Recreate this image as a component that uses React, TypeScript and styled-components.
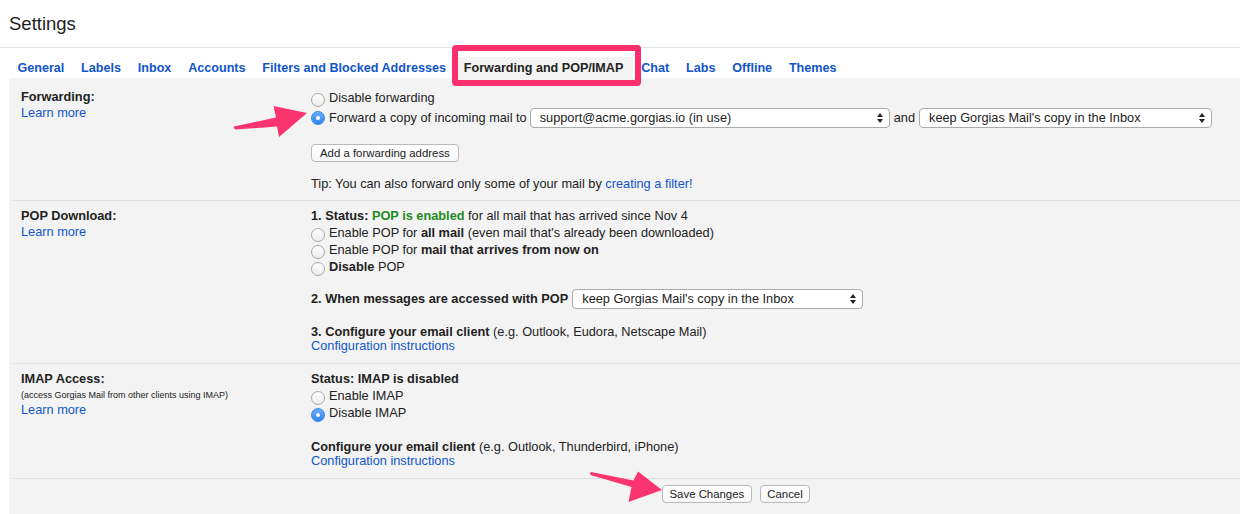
import React from 'react';
import styled, { createGlobalStyle } from 'styled-components';

const GlobalStyle = createGlobalStyle`
  html, body { margin: 0; padding: 0; background: #fff; }
  body {
    font-family: "Liberation Sans", Arial, Helvetica, sans-serif;
    font-size: 12.75px;
    color: #222;
  }
  * { box-sizing: border-box; }
`;

const Page = styled.div`
  position: relative;
  width: 1240px;
  height: 514px;
  overflow: hidden;
  background: #fff;
  display: flex;
  flex-direction: column;
`;

const Header = styled.div`
  height: 48px;
  padding: 13px 0 0 9px;
  border-bottom: 1px solid #e3e3e3;
  font-size: 18.5px;
  line-height: normal;
  color: #222;
`;

const TabBar = styled.div`
  display: flex;
  align-items: flex-end;
  height: 30px;
  padding: 9px 0 0 9px;
  font-size: 12.6px;
`;

const Tab = styled.div<{ $active?: boolean }>`
  padding: 4px ${(p) => (p.$active ? '9.5px' : '8.4px')} 3px;
  line-height: 14px;
  font-weight: bold;
  white-space: nowrap;
  color: ${(p) => (p.$active ? '#222' : '#15c')};
  background: ${(p) => (p.$active ? '#f3f3f3' : 'transparent')};
`;

const Panel = styled.div`
  flex: 1;
  margin-left: 9px;
  padding-top: 4px;
  background: #f3f3f3;
`;

const Section = styled.div<{ $pb: number }>`
  display: grid;
  grid-template-columns: 290px 1fr;
  margin-left: 4px;
  padding: 7px 0 ${(p) => p.$pb}px 8px;
  border-bottom: 1px solid #e0e0e0;
`;

const Col = styled.div`
  display: flex;
  flex-direction: column;
  align-items: flex-start;
`;

const SectionTitle = styled.div`
  font-weight: bold;
  line-height: 16px;
`;

const Link = styled.a`
  color: #15c;
  text-decoration: none;
  cursor: pointer;
`;

const BlockLink = styled(Link)<{ $lh?: number }>`
  display: block;
  line-height: ${(p) => p.$lh ?? 16}px;
`;

const Note = styled.div`
  font-size: 9px;
  line-height: 14px;
  margin-top: 1px;
  white-space: nowrap;
`;

const Line = styled.div<{ $mt?: number; $lh?: number }>`
  line-height: ${(p) => p.$lh ?? 16}px;
  margin-top: ${(p) => p.$mt ?? 0}px;
  white-space: nowrap;
`;

const Green = styled.b`
  color: #1f8a1f;
`;

const RadioRow = styled.label`
  display: flex;
  align-items: center;
  height: 17px;
  line-height: 17px;
  white-space: nowrap;
`;

const ControlRow = styled.div<{ $mt?: number }>`
  display: flex;
  align-items: center;
  height: 20px;
  line-height: 16px;
  margin-top: ${(p) => p.$mt ?? 0}px;
  white-space: nowrap;
`;

const Radio = styled.span<{ $checked?: boolean; $dy?: number }>`
  position: relative;
  flex-shrink: 0;
  width: 14px;
  height: 14px;
  margin: ${(p) => p.$dy ?? 5}px 4px 0 0;
  border-radius: 50%;
  border: 1px solid ${(p) => (p.$checked ? '#3b86e8' : '#a8a8a8')};
  background: ${(p) =>
    p.$checked
      ? 'linear-gradient(#6aaefa, #2f84f0)'
      : 'linear-gradient(#ffffff, #ececec)'};
  &::after {
    content: '';
    display: ${(p) => (p.$checked ? 'block' : 'none')};
    position: absolute;
    left: 4px;
    top: 4px;
    width: 4px;
    height: 4px;
    border-radius: 50%;
    background: #fff;
  }
`;

const SelectBox = styled.div<{ $w: number; $ml?: number }>`
  display: flex;
  align-items: center;
  justify-content: space-between;
  width: ${(p) => p.$w}px;
  height: 20px;
  margin-left: ${(p) => p.$ml ?? 0}px;
  padding: 0 6px 0 9px;
  border: 1px solid #ababab;
  border-radius: 4px;
  background: #fff;
  line-height: 16px;
`;

const Joiner = styled.span`
  margin: 0 4px;
`;

const Button = styled.button<{ $mt?: number; $px?: number }>`
  height: 18px;
  margin-top: ${(p) => p.$mt ?? 0}px;
  padding: 0 ${(p) => p.$px ?? 7}px;
  font-family: "Liberation Sans", Arial, Helvetica, sans-serif;
  font-size: 11.4px;
  line-height: 16px;
  color: #222;
  background: linear-gradient(#ffffff, #f7f7f7);
  border: 1px solid #b9b9b9;
  border-radius: 4px;
  white-space: nowrap;
`;

const Footer = styled.div`
  display: flex;
  gap: 8px;
  padding: 6px 0 0 653px;
`;

const Highlight = styled.div`
  position: absolute;
  left: 452px;
  top: 45px;
  width: 189px;
  height: 41px;
  border: 6px solid #fb2f6d;
  border-radius: 4px;
  pointer-events: none;
`;

const Overlay = styled.svg`
  position: absolute;
  left: 0;
  top: 0;
  pointer-events: none;
`;

const Arrows = () => (
  <svg width="6" height="10" viewBox="0 0 6 10">
    <path d="M0 4 L3 0 L6 4 Z M0 6 L3 10 L6 6 Z" fill="#222" />
  </svg>
);

const Select = ({ w, ml, children }: { w: number; ml?: number; children: React.ReactNode }) => (
  <SelectBox $w={w} $ml={ml}>
    <span>{children}</span>
    <Arrows />
  </SelectBox>
);

export default function App() {
  return (
    <>
      <GlobalStyle />
      <Page>
        <Header>Settings</Header>
        <TabBar>
          <Tab>General</Tab>
          <Tab>Labels</Tab>
          <Tab>Inbox</Tab>
          <Tab>Accounts</Tab>
          <Tab>Filters and Blocked Addresses</Tab>
          <Tab $active>Forwarding and POP/IMAP</Tab>
          <Tab>Chat</Tab>
          <Tab>Labs</Tab>
          <Tab>Offline</Tab>
          <Tab>Themes</Tab>
        </TabBar>
        <Panel>
          <Section $pb={8}>
            <Col>
              <SectionTitle>Forwarding:</SectionTitle>
              <BlockLink>Learn more</BlockLink>
            </Col>
            <Col>
              <RadioRow>
                <Radio />
                Disable forwarding
              </RadioRow>
              <ControlRow $mt={2}>
                <Radio $checked $dy={0} />
                Forward a copy of incoming mail to
                <Select w={360} ml={3}>support@acme.gorgias.io (in use)</Select>
                <Joiner>and</Joiner>
                <Select w={293}>keep Gorgias Mail's copy in the Inbox</Select>
              </ControlRow>
              <Button $mt={16} $px={8}>Add a forwarding address</Button>
              <Line $mt={14}>
                Tip: You can also forward only some of your mail by <Link>creating a filter!</Link>
              </Line>
            </Col>
          </Section>

          <Section $pb={10}>
            <Col>
              <SectionTitle>POP Download:</SectionTitle>
              <BlockLink>Learn more</BlockLink>
            </Col>
            <Col>
              <Line>
                <b>1. Status: </b>
                <Green>POP is enabled</Green> for all mail that has arrived since Nov 4
              </Line>
              <RadioRow>
                <Radio />
                Enable POP for&nbsp;<b>all mail</b>&nbsp;(even mail that's already been downloaded)
              </RadioRow>
              <RadioRow>
                <Radio />
                Enable POP for&nbsp;<b>mail that arrives from now on</b>
              </RadioRow>
              <RadioRow>
                <Radio />
                <b>Disable</b>&nbsp;POP
              </RadioRow>
              <ControlRow $mt={14}>
                <b>2. When messages are accessed with POP</b>
                <Select w={291} ml={4}>keep Gorgias Mail's copy in the Inbox</Select>
              </ControlRow>
              <Line $mt={16} $lh={14}>
                <b>3. Configure your email client</b> (e.g. Outlook, Eudora, Netscape Mail)
              </Line>
              <BlockLink $lh={14}>Configuration instructions</BlockLink>
            </Col>
          </Section>

          <Section $pb={10}>
            <Col>
              <SectionTitle>IMAP Access:</SectionTitle>
              <Note>(access Gorgias Mail from other clients using IMAP)</Note>
              <BlockLink>Learn more</BlockLink>
            </Col>
            <Col>
              <Line>
                <b>Status: IMAP is disabled</b>
              </Line>
              <RadioRow>
                <Radio />
                Enable IMAP
              </RadioRow>
              <RadioRow>
                <Radio $checked />
                Disable IMAP
              </RadioRow>
              <Line $mt={19} $lh={14}>
                <b>Configure your email client</b> (e.g. Outlook, Thunderbird, iPhone)
              </Line>
              <BlockLink $lh={14}>Configuration instructions</BlockLink>
            </Col>
          </Section>

          <Footer>
            <Button $px={6.5}>Save Changes</Button>
            <Button $px={6.5}>Cancel</Button>
          </Footer>
        </Panel>

        <Highlight />
        <Overlay width="1240" height="514" viewBox="0 0 1240 514">
          <path
            d="M234 126.5 L276 117.5 L273.5 106 L307 113 L279 137 L277 126.5 L235.5 129.5 Q233 128.5 234 126.5 Z"
            fill="#fb3470"
          />
          <path
            d="M591 472 L633.5 480.5 L638 471.5 L662 490 L628.5 502 L631.5 487 L590.5 475 Q589 473.5 591 472 Z"
            fill="#fb3470"
          />
        </Overlay>
      </Page>
    </>
  );
}
